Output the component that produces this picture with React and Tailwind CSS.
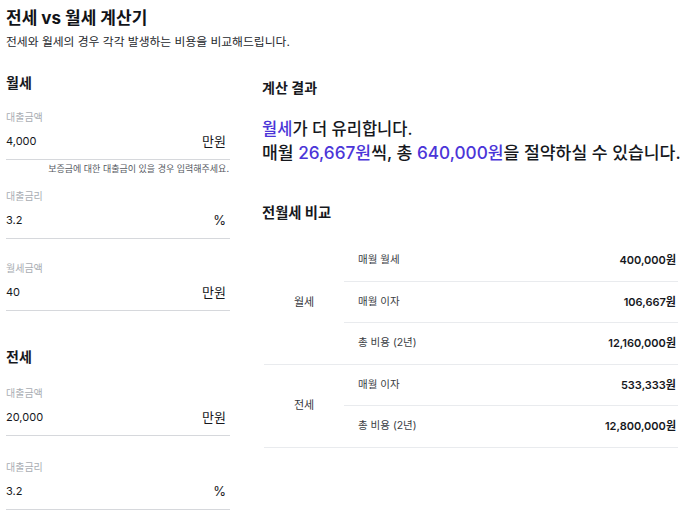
import React from 'react';

const font = { fontFamily: 'Inter, "Noto Sans CJK KR", sans-serif' };

const Field = ({ label, value, unit, className = '' }) => (
  <div className={`border-b border-[#d6d8dc] pb-[8px] ${className}`}>
    <p className="text-[10px] leading-[14px] text-[#a9adb3]">{label}</p>
    <div className="mt-[7px] flex items-center justify-between pr-[4px] leading-[20px] text-[#16181d]">
      <span className="text-[11px]">{value}</span>
      <span className="text-[13px]">{unit}</span>
    </div>
  </div>
);

const groups = [
  {
    name: '월세',
    rows: [
      ['매월 월세', '400,000원'],
      ['매월 이자', '106,667원'],
      ['총 비용 (2년)', '12,160,000원'],
    ],
  },
  {
    name: '전세',
    rows: [
      ['매월 이자', '533,333원'],
      ['총 비용 (2년)', '12,800,000원'],
    ],
  },
];

const App = () => {
  return (
    <div className="min-h-screen overflow-hidden bg-white px-[6px] pt-[4px] text-[#16181d]" style={font}>
      <h1 className="text-[17px] font-bold leading-[28px] text-[#111318]">전세 vs 월세 계산기</h1>
      <p className="text-[11.8px] leading-[20px] text-[#26282d]">전세와 월세의 경우 각각 발생하는 비용을 비교해드립니다.</p>

      <div className="mt-[19px] flex gap-[32px]">
        {/* inputs */}
        <div className="w-[224px] shrink-0">
          <h2 className="text-[14px] font-bold leading-[24px]">월세</h2>
          <Field className="mt-[15px]" label="대출금액" value="4,000" unit="만원" />
          <p className="mt-[3px] pr-[1px] text-right text-[9px] leading-[12px] text-[#555961]">
            보증금에 대한 대출금이 있을 경우 입력해주세요.
          </p>
          <Field className="mt-[14px]" label="대출금리" value="3.2" unit="%" />
          <Field className="mt-[22px]" label="월세금액" value="40" unit="만원" />

          <h2 className="mt-[34px] text-[14px] font-bold leading-[24px]">전세</h2>
          <Field className="mt-[17px]" label="대출금액" value="20,000" unit="만원" />
          <Field className="mt-[24px]" label="대출금리" value="3.2" unit="%" />
        </div>

        {/* result */}
        <div className="w-[416px] shrink-0">
          <h3 className="mt-[7px] text-[14px] font-semibold leading-[20px]">계산 결과</h3>
          <div className="mt-[19px] whitespace-nowrap font-medium leading-[24px] text-[#16181d]">
            <p className="text-[16.5px]">
              <span className="text-[#4b35d8]">월세</span>가 더 유리합니다.
            </p>
            <p className="text-[17.2px]">
              매월 <span className="text-[#4b35d8]">26,667원</span>씩, 총{' '}
              <span className="text-[#4b35d8]">640,000원</span>을 절약하실 수 있습니다.
            </p>
          </div>

          <h3 className="mt-[36px] text-[14.3px] font-bold leading-[24px]">전월세 비교</h3>
          <div className="ml-[2px] mt-[15px] grid grid-cols-[80px_1fr_auto]">
            {groups.map((g) => (
              <React.Fragment key={g.name}>
                <div
                  className={`flex items-center justify-center border-b border-[#e9ebee] text-[11px] text-[#33363c] ${
                    g.rows.length === 3 ? 'row-span-3' : 'row-span-2'
                  }`}
                >
                  {g.name}
                </div>
                {g.rows.map(([label, value], i) => (
                  <React.Fragment key={label + i}>
                    <div className="col-start-2 flex h-[41.5px] items-center border-b border-[#e9ebee] pl-[14px] text-[10.5px] text-[#3a3d43]">
                      {label}
                    </div>
                    <div className="flex h-[41.5px] items-center justify-end border-b border-[#e9ebee] pr-[2px] text-[11px] font-semibold text-[#16181d]">
                      {value}
                    </div>
                  </React.Fragment>
                ))}
              </React.Fragment>
            ))}
          </div>
        </div>
      </div>
    </div>
  );
};

export default App;
